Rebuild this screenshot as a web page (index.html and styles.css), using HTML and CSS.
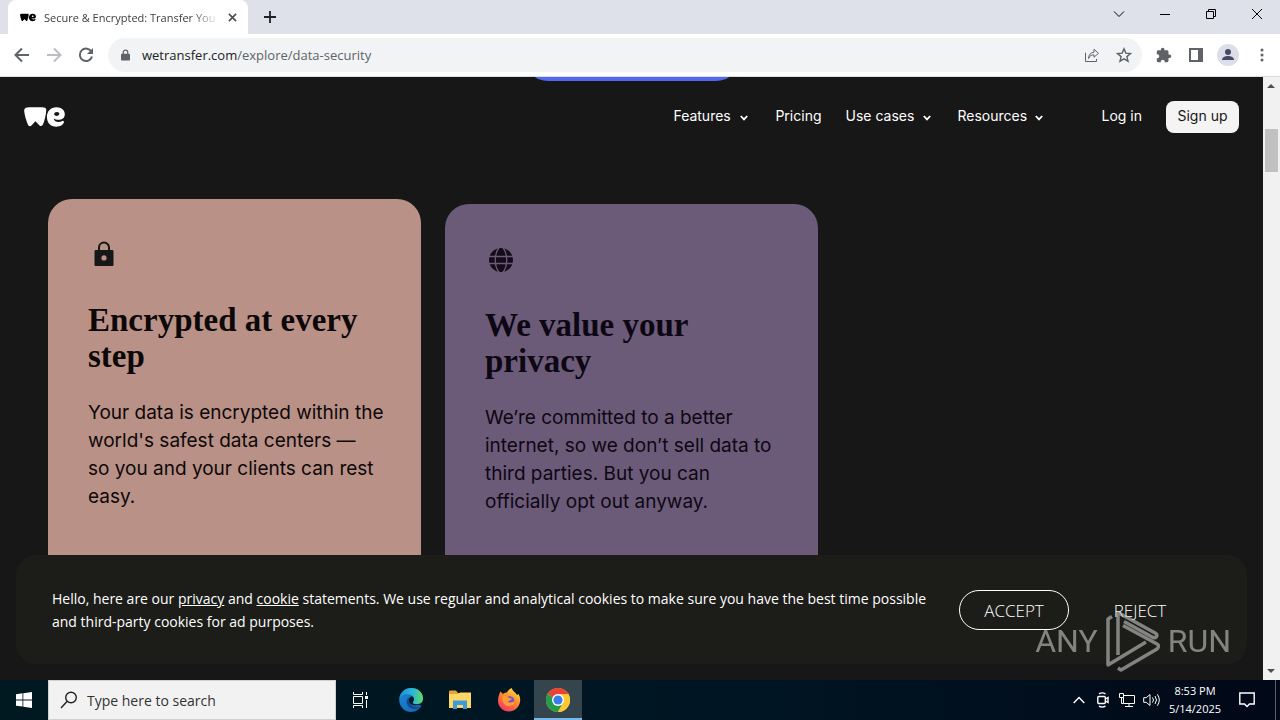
FILE: index.html
```html
<!DOCTYPE html>
<html lang="en">
<head>
<meta charset="utf-8">
<meta name="viewport" content="width=device-width, initial-scale=1">
<title>Secure &amp; Encrypted: Transfer Your Files</title>
<link rel="stylesheet" href="styles.css">
</head>
<body>
<svg class="defs" aria-hidden="true">
  <symbol id="we" viewBox="0 0 42 20"><path d="M.2 4C0 1.700 1.200.4 3.500.2c3.500-.3 13-.3 16.800 0 2 .2 2.700 1.200 2.500 3-.4 5.300-1.500 10-3.300 14.300-.7 1.700-2.200 2.300-3.600 1.200L12.500 15c-.6-.6-1-.6-1.600 0l-3.200 3.700c-1.400 1.300-3 1-3.700-.9C2.300 13.500.8 9 .2 4zM33.300 0c5.200 0 8.500 3.200 8.500 7.100 0 3.700-2.900 5.800-6.500 5.800-2 0-3.400-.5-4.200-1.200-.3-.3-.6-.1-.5.3.4 1.900 2.200 3 4.700 3 1.600 0 2.900-.4 3.900-1 1-.5 2 .4 1.700 1.500-.8 2.800-3.900 4.500-7.800 4.500-5.800 0-9.600-4-9.600-10C23.500 4 27.500 0 33.300 0zm.4 4.800c-1.600 0-2.800.9-2.800 2.200 0 1.200 1 1.900 2.400 1.900 1.700 0 2.900-.9 2.900-2.200 0-1.100-1-1.900-2.500-1.900z"/></symbol>
  <symbol id="chev" viewBox="0 0 8 6"><path d="M.8 1 4 4.400 7.200 1" fill="none" stroke="currentColor" stroke-width="1.800"/></symbol>
</svg>

<header class="tabstrip">
  <div class="tab">
    <svg class="favicon" aria-hidden="true"><use href="#we"/></svg>
    <span class="tab-title">Secure &amp; Encrypted: Transfer You</span>
    <button class="icon-btn tab-close" aria-label="Close tab"><svg width="9" height="9" viewBox="0 0 10 10" class="line bold"><path d="M1 1l8 8M9 1L1 9"/></svg></button>
  </div>
  <button class="icon-btn new-tab" aria-label="New tab"><svg width="14" height="14" viewBox="0 0 14 14" class="line bold"><path d="M7 1v12M1 7h12"/></svg></button>
  <div class="window-controls">
    <button class="icon-btn" aria-label="Search tabs"><svg width="12" height="12" viewBox="0 0 12 12" class="line"><path d="M1 3.500l5 5 5-5"/></svg></button>
    <button class="icon-btn" aria-label="Minimize"><svg width="12" height="12" viewBox="0 0 12 12" class="line"><path d="M1 6.500h10"/></svg></button>
    <button class="icon-btn" aria-label="Restore"><svg width="12" height="12" viewBox="0 0 12 12" class="line"><path d="M1.500 3.500h7v7h-7zM3.500 3.500v-2h7v7h-2"/></svg></button>
    <button class="icon-btn" aria-label="Close"><svg width="12" height="12" viewBox="0 0 12 12" class="line"><path d="M1 1l10 10M11 1L1 11"/></svg></button>
  </div>
</header>

<div class="toolbar">
  <button class="icon-btn tool" aria-label="Back"><svg width="16" height="16" viewBox="0 0 16 16" class="line thick"><path d="M15 8H2M8 1.500L1.500 8 8 14.500"/></svg></button>
  <button class="icon-btn tool faded" aria-label="Forward"><svg width="16" height="16" viewBox="0 0 16 16" class="line thick"><path d="M1 8h13M8 1.500L14.500 8 8 14.500"/></svg></button>
  <button class="icon-btn tool" aria-label="Reload"><svg width="16" height="16" viewBox="0 0 16 16"><path d="M13.400 4.700A6.200 6.200 0 1 0 14 9.500" fill="none" stroke="currentColor" stroke-width="2"/><path d="M15 1v6H9z" fill="currentColor"/></svg></button>
  <div class="omnibox">
    <svg width="9" height="12" viewBox="0 0 10 12" aria-hidden="true"><path d="M2.500 5V3a2.500 2.500 0 0 1 5 0v2" fill="none" stroke="currentColor" stroke-width="1.400"/><rect y="4.500" width="10" height="7.500" rx="1" fill="currentColor"/></svg>
    <span class="url"><b>wetransfer.com</b>/explore/data-security</span>
    <button class="icon-btn tool" aria-label="Share"><svg width="16" height="16" viewBox="0 0 16 16" class="line"><path d="M2 6H1.500v8.500h11V12M4.500 11.500c.3-4 2.300-6 5.500-6.300V2.300l4.500 4L10 10.200V7.800c-2.500 0-4.200 1.200-5.500 3.700z"/></svg></button>
    <button class="icon-btn tool" aria-label="Bookmark"><svg width="16" height="16" viewBox="0 0 16 16" class="line mid"><path d="M8 1.800l1.800 4.300 4.700.4-3.600 3.100 1.100 4.600L8 11.800l-4 2.400 1.100-4.600L1.500 6.500l4.700-.4z"/></svg></button>
  </div>
  <button class="icon-btn tool" aria-label="Extensions"><svg width="16" height="16" viewBox="0 0 16 16"><path fill="currentColor" d="M13.500 7.500h-1V4.800c0-.8-.7-1.500-1.500-1.500H8.500v-.8a1.800 1.800 0 0 0-3.600 0v.8H2.300C1.500 3.300.8 4 .8 4.800v2.500h.9a2 2 0 0 1 0 3.900H.8v2.500c0 .8.700 1.500 1.500 1.500h2.500v-.9a2 2 0 0 1 3.900 0v.9H11c.8 0 1.500-.7 1.500-1.500v-2.600h1a1.800 1.800 0 0 0 0-3.600z"/></svg></button>
  <button class="icon-btn tool" aria-label="Side panel"><svg width="14" height="14" viewBox="0 0 14 14"><path fill="currentColor" fill-rule="evenodd" d="M0 0h14v14H0zM2 2v10h7V2z"/></svg></button>
  <button class="icon-btn tool" aria-label="Profile"><svg width="22" height="22" viewBox="0 0 22 22"><circle cx="11" cy="11" r="11" fill="#dcdfe8"/><circle cx="11" cy="8" r="3" fill="#454c68"/><path d="M5 16c0-2.700 3-4 6-4s6 1.300 6 4z" fill="#454c68"/></svg></button>
  <button class="icon-btn tool" aria-label="Menu"><svg width="4" height="14" viewBox="0 0 4 14" fill="currentColor"><circle cx="2" cy="2" r="1.500"/><circle cx="2" cy="7" r="1.500"/><circle cx="2" cy="12" r="1.500"/></svg></button>
</div>

<div class="window">
  <div class="page">
    <div class="hero-edge"></div>
    <header class="site-header">
      <a href="#" class="logo" aria-label="WeTransfer"><svg width="41" height="20" aria-hidden="true"><use href="#we"/></svg></a>
      <nav>
        <button class="nav-item features">Features <svg width="8" height="6" aria-hidden="true"><use href="#chev"/></svg></button>
        <a href="#" class="nav-item">Pricing</a>
        <button class="nav-item cases">Use cases <svg width="8" height="6" aria-hidden="true"><use href="#chev"/></svg></button>
        <button class="nav-item resources">Resources <svg width="8" height="6" aria-hidden="true"><use href="#chev"/></svg></button>
      </nav>
      <a href="#" class="nav-item login">Log in</a>
      <a href="#" class="signup">Sign up</a>
    </header>

    <main class="cards">
      <article class="card rose">
        <svg width="32" height="32" viewBox="0 0 32 32" aria-hidden="true"><path d="M11 13V8.500a5 5 0 0 1 10 0V13" fill="none" stroke="#171717" stroke-width="2"/><path fill="#171717" fill-rule="evenodd" d="M8 11h16c1 0 1.500.5 1.500 1.500v13c0 1-.5 1.500-1.500 1.500H8c-1 0-1.500-.5-1.500-1.500v-13C6.500 11.500 7 11 8 11zm8 5.300a2.600 2.600 0 1 0 0 5.200 2.600 2.600 0 0 0 0-5.200z"/></svg>
        <h2>Encrypted at every<br>step</h2>
        <p>Your data is encrypted within the<br>world's safest data centers —<br>so you and your clients can rest<br>easy.</p>
      </article>
      <article class="card violet">
        <svg width="32" height="32" viewBox="0 0 32 32" aria-hidden="true"><circle cx="16" cy="16" r="12" fill="#120d18"/><path d="M4 12.500h24M4 19.500h24M14 3.500c-5 7-5 18 0 25M18 3.500c5 7 5 18 0 25" fill="none" stroke="#6b5b78" stroke-width="1.300"/></svg>
        <h2>We value your<br>privacy</h2>
        <p>We’re committed to a better<br>internet, so we don’t sell data to<br>third parties. But you can<br>officially opt out anyway.</p>
      </article>
    </main>

    <section class="cookies" aria-label="Cookie consent">
      <p>Hello, here are our <a href="#">privacy</a> and <a href="#">cookie</a> statements. We use regular and analytical cookies to make sure you have the best time possible<br>and third-party cookies for ad purposes.</p>
      <button class="accept">ACCEPT</button>
      <button class="reject">REJECT</button>
    </section>

    <div class="watermark">
      <span>ANY</span>
      <svg width="54" height="62" viewBox="0 0 54 62" aria-hidden="true"><path d="M6 6.500L2 9v46l38-23M12 45V2.500l38 21c2 2 0 5-3 4L18 11.500M12 58l3 2 36-21c2-2 2-4 0-5L17 15.500" fill="none" stroke="currentColor" stroke-width="3.500" stroke-linejoin="round"/></svg>
      <span>RUN</span>
    </div>
  </div>
  <div class="scrollbar" aria-hidden="true"><i class="up"></i><i class="thumb"></i><i class="down"></i></div>
</div>

<footer class="taskbar">
  <button class="icon-btn slot" aria-label="Start"><svg width="16" height="16" viewBox="0 0 16 16" fill="#fff"><path d="M0 2.200L6.500 1.300v6.200H0zM7.300 1.200L16 0v7.500H7.300zM0 8.400h6.500v6.200L0 13.700zM7.300 8.400H16V16l-8.700-1.200z"/></svg></button>
  <label class="search">
    <svg width="18" height="18" viewBox="0 0 18 18" class="line mid" aria-hidden="true"><circle cx="11" cy="6.500" r="5.300"/><path d="M7 10.500L1 17"/></svg>
    <input type="text" aria-label="Search" placeholder="Type here to search">
  </label>
  <button class="icon-btn slot" aria-label="Task view"><svg width="16" height="16" viewBox="0 0 16 16" class="line"><path d="M1.500 0v2.500h9V0M1.500 16v-2.500h9V16M1.500 4.500h9v7h-9zM14.500 0v3M14.500 8v8"/><path d="M13 4h3v3h-3z" fill="#fff" stroke="none"/></svg></button>
  <div class="apps">
    <button class="icon-btn slot" aria-label="Edge"><svg width="24" height="24" viewBox="0 0 24 24"><defs><linearGradient id="ea" x2="1"><stop stop-color="#1a8fdc"/><stop offset=".55" stop-color="#27b6d8"/><stop offset="1" stop-color="#65da60"/></linearGradient><linearGradient id="eb" x2="1" y2="1"><stop stop-color="#1b86d8"/><stop offset="1" stop-color="#1565b5"/></linearGradient></defs><path d="M.2 11C1 4.500 6 0 12.300 0 19 0 24 4.800 24 10.200c0 4-2.800 6-6 6l4.500 1.600C20.500 21.500 16.500 24 12 24 5.400 24 0 18.600.2 11z" fill="url(#eb)"/><path d="M.2 11C1 4.500 6 0 12.300 0 19 0 24 4.800 24 10.200c0 4-2.800 6-6 6-2.500 0-4.300-.8-4.300-1.800 0-.6 1.300-1.200 1.300-3.200C15 8.500 12 6.300 8.500 6.300 4.300 6.300 1.300 8.400.2 11z" fill="url(#ea)"/><path d="M10 9.500c-2.700 1.500-3 5.500-1 8.300 3 4.200 8.700 4.200 13 .7-3.500 1.200-8 .7-10.500-2.200-1.700-2-2-4.500-1.500-6.800z" fill="#114a8b"/><path d="M13.700 14.400c0-.6 1.300-1.200 1.300-3.200 0-1.200-.7-2.200-1.700-3-1.800.3-3.300 1.300-3.500 3.200-.2 1.800.8 3.700 2.300 4.900 2.500 1.600 6.800 1.700 9.300-.8-3 1.500-7.700.8-7.700-1.100z" fill="#041a2c"/></svg></button>
    <button class="icon-btn slot" aria-label="File Explorer"><svg width="22" height="20" viewBox="0 0 22 20"><path d="M0 1.500Q0 .5 1 .5h6l2 2.500h12v14.500H0z" fill="#e8a33a"/><path d="M0 4h9l2-1.500h11V18H0z" fill="#ffd766"/><path d="M4 10.500h14V19h-4v-4H8v4H4z" fill="#3c9bd8"/></svg></button>
    <button class="icon-btn slot" aria-label="Firefox"><svg width="24" height="24" viewBox="0 0 24 24"><defs><linearGradient id="ff" x1=".8" x2=".2" y2="1"><stop stop-color="#ffe545"/><stop offset=".45" stop-color="#ff8a2b"/><stop offset="1" stop-color="#ef3069"/></linearGradient></defs><path d="M3.500 3.500L6 6c1-1 2.500-1.500 4-1.500C10.500 2.500 13 .5 15 0c0 3 3.500 4 5 7l1.500-1c1.500 2.500 2 5 1.500 8-1 5.500-5.500 9.500-11 9.500C5.500 23.500 1 18.500 1 13c0-3.500 1-6.500 2.500-9.500z" fill="url(#ff)"/><circle cx="12.500" cy="13" r="4.800" fill="#7650cf"/><path d="M6 8.500c3-1 5 0 6 1.500l3 .5c-1 2-3.500 2-4 3.500 3 1.500 5-1 7-.5-1 4-5 5.500-8.500 4C6 16 4.500 12 6 8.500z" fill="#ff9b36"/></svg></button>
    <button class="icon-btn slot active" aria-label="Chrome"><svg width="24" height="24" viewBox="0 0 24 24"><circle cx="12" cy="12" r="12" fill="#fcc934"/><path d="M12 12L1.600 6A12 12 0 0 1 22.400 6z" fill="#e94335"/><path d="M1.600 6A12 12 0 0 0 12 24l5-9-5-3z" fill="#269b4b"/><path d="M12 6h10.400A12 12 0 0 1 12 24l5-9z" fill="#fcc934"/><circle cx="12" cy="12" r="6" fill="#fff"/><circle cx="12" cy="12" r="4.600" fill="#397fea"/></svg></button>
  </div>
  <div class="tray">
    <button class="icon-btn" aria-label="Show hidden icons"><svg width="12" height="8" viewBox="0 0 12 8" class="line mid"><path d="M.7 7L6 1.500 11.300 7"/></svg></button>
    <button class="icon-btn" aria-label="Meet now"><svg width="12" height="16" viewBox="0 0 12 16" class="line mid"><rect x=".8" y="4.500" width="7.500" height="7" rx="1"/><path d="M8.500 7l2.500-1.500v5L8.500 9M2 1.800Q5 0 8.500 1.800M2 14.200q3 1.800 6.500 0"/></svg></button>
    <button class="icon-btn" aria-label="Network"><svg width="16" height="14" viewBox="0 0 16 14" class="line"><path d="M4.500 2.500h11v8h-11zM10 10.500v3M6 13.500h8M2.500 4.500v6h2"/><path d="M.5.500h4v4h-4z" fill="#020b1e"/></svg></button>
    <button class="icon-btn" aria-label="Volume"><svg width="17" height="14" viewBox="0 0 17 14" class="line"><path d="M.7 4.700h2.500L7 1.500v11L3.200 9.300H.7zM9.500 4.500q2 2.500 0 5M12 3q3 4 0 8M14.300 1.300q4 5.700 0 11.400"/></svg></button>
    <div class="clock"><span>8:53 PM</span><span>5/14/2025</span></div>
    <button class="icon-btn note" aria-label="Notifications"><svg width="16" height="16" viewBox="0 0 16 16" class="line mid"><path d="M.8 1h14.400v11H10.500L8 14.500 5.500 12H.8z"/></svg></button>
  </div>
</footer>
</body>
</html>
```
FILE: styles.css
```css
* { box-sizing: border-box; }
body {
  margin: 0;
  height: 100vh;
  display: flex;
  flex-direction: column;
  overflow: hidden;
  background: #171717;
  font-family: "Open Sans", "Noto Sans", sans-serif;
}
button { border: 0; padding: 0; background: none; font: inherit; color: inherit; }
a { color: inherit; text-decoration: none; }
svg { display: block; flex: none; }
.defs { position: absolute; width: 0; height: 0; }
.line { fill: none; stroke: currentColor; stroke-width: 1; }
.line.mid { stroke-width: 1.4; }
.line.bold { stroke-width: 1.8; }
.line.thick { stroke-width: 2; }
.icon-btn { display: flex; align-items: center; justify-content: center; flex: none; }

/* Browser chrome */
.tabstrip { display: flex; height: 34px; padding-left: 8px; background: #dee1e9; color: #202124; }
.tab {
  display: flex;
  align-items: center;
  width: 240px;
  padding: 0 11px 0 12px;
  border-radius: 8px 8px 0 0;
  background: #fff;
}
.favicon { width: 16px; height: 9px; }
.tab-title {
  flex: 1;
  margin-left: 8px;
  overflow: hidden;
  white-space: nowrap;
  font-size: 11px;
  color: #3c4043;
  mask-image: linear-gradient(90deg, #000 84%, transparent);
}
.tab-close { width: 10px; margin-left: 8px; color: #4b4f54; }
.new-tab { width: 28px; margin-left: 8px; }
.window-controls { display: flex; margin-left: auto; padding-bottom: 6px; color: #000; }
.window-controls .icon-btn { width: 46px; }

.toolbar {
  display: flex;
  align-items: center;
  height: 43px;
  padding: 0 14px 0 6px;
  background: #fff;
  border-bottom: 1px solid #dadce0;
  color: #5f6368;
}
.tool { width: 32px; height: 32px; }
.faded { color: #bcbec1; }
.toolbar > .tool:last-child { width: 28px; margin: 0 -10px 0 4px; }
.omnibox {
  display: flex;
  align-items: center;
  flex: 1;
  height: 34px;
  margin: 0 6px;
  padding: 0 2px 0 13px;
  border-radius: 17px;
  background: #f1f3f4;
}
.url { flex: 1; margin-left: 12px; font-size: 13px; white-space: nowrap; }
.url b { font-weight: 400; color: #202124; }

/* Page */
.window { display: flex; flex: 1; min-height: 0; }
.page { position: relative; flex: 1; overflow: hidden; background: #171717; }
.hero-edge {
  position: absolute;
  top: -44px;
  left: 50%;
  width: 216px;
  height: 48px;
  margin-left: -108px;
  border-radius: 24px;
  background: #5268ef;
}
.site-header {
  display: flex;
  align-items: center;
  padding: 24px;
  font: 14px/32px Inter, "Liberation Sans", sans-serif;
  color: #fff;
}
.logo { margin-right: auto; fill: #fff; }
nav { display: flex; gap: 24px; margin-right: 56px; }
.nav-item { display: flex; align-items: center; justify-content: space-between; white-space: nowrap; line-height: 30px; padding-bottom: 2px; }
.nav-item svg { margin: 4px 3px 0 0; }
.features { width: 78px; }
.cases, .resources { width: 88px; }
.login { margin-right: 24px; }
.signup { width: 73px; border-radius: 8px; background: #f4f4f4; color: #171717; text-align: center; line-height: 30px; padding-bottom: 2px; }

.cards { display: grid; grid-template-columns: repeat(3, minmax(0, 1fr)); gap: 24px; padding: 42px 48px 0; }
.card { height: 420px; padding: 40px; border-radius: 24px; color: #0d0808; white-space: nowrap; }
.rose { background: #b99187; }
.violet { margin-top: 5px; background: #6b5b78; color: #0d0713; }
.card h2 { margin: 31px 0 0; font: 700 33px/36px "Liberation Serif", serif; }
.card p { margin: 25px 0 0; font: 19px/28px Inter, "Liberation Sans", sans-serif; }

.cookies {
  position: absolute;
  left: 16px;
  right: 16px;
  bottom: 16px;
  display: flex;
  align-items: center;
  padding: 32px 36px 31px;
  border-radius: 20px;
  background: #1c1d19;
  color: #fff;
}
.cookies p { flex: 1; margin: 0; font-size: 14px; line-height: 23px; white-space: nowrap; }
.cookies a { text-decoration: underline; }
.cookies button { width: 110px; height: 40px; font-size: 17px; font-weight: 300; }
.accept { border: 1px solid #fff; border-radius: 20px; }
.cookies .reject { margin: 0 16px; }

.watermark {
  position: absolute;
  right: 32px;
  bottom: 8px;
  display: flex;
  align-items: center;
  gap: 8px;
  color: #c3c3c3;
  opacity: .62;
  font: 32px/60px Roboto, "Liberation Sans", sans-serif;
}

.scrollbar { position: relative; width: 17px; background: #f1f1f1; }
.scrollbar i { position: absolute; }
.thumb { top: 52px; left: 2px; width: 13px; height: 43px; background: #c1c1c1; }
.up, .down { left: 4px; border: 4px solid transparent; }
.up { top: 3px; border-bottom-color: #505050; }
.down { bottom: 3px; border-top-color: #505050; }

/* Taskbar */
.taskbar { display: flex; height: 40px; background: linear-gradient(90deg, #001820, #001523 60%, #010817); color: #fff; }
.slot { width: 48px; }
.apps { display: flex; gap: 1px; margin-left: 3px; }
.slot.active { background: #34454d; border-bottom: 2px solid #76b9ed; padding-top: 2px; }
.search { display: flex; align-items: center; width: 288px; padding: 0 11px; gap: 9px; background: #f2f2f2; border: 1px solid #d0d0d0; color: #222; }
.search input { width: 100%; border: 0; outline: 0; padding: 0; background: none; font: 14px "Open Sans", sans-serif; }
.search input::placeholder { color: #333; opacity: 1; }
.tray { display: flex; align-items: center; margin: 0 4px 0 auto; padding-right: 8px; border-right: 1px solid #56616d; }
.tray .icon-btn { width: 24px; height: 40px; }
.clock { display: flex; flex-direction: column; align-items: center; width: 64px; font-size: 11px; line-height: 18px; }
.tray .note { width: 40px; }
```
